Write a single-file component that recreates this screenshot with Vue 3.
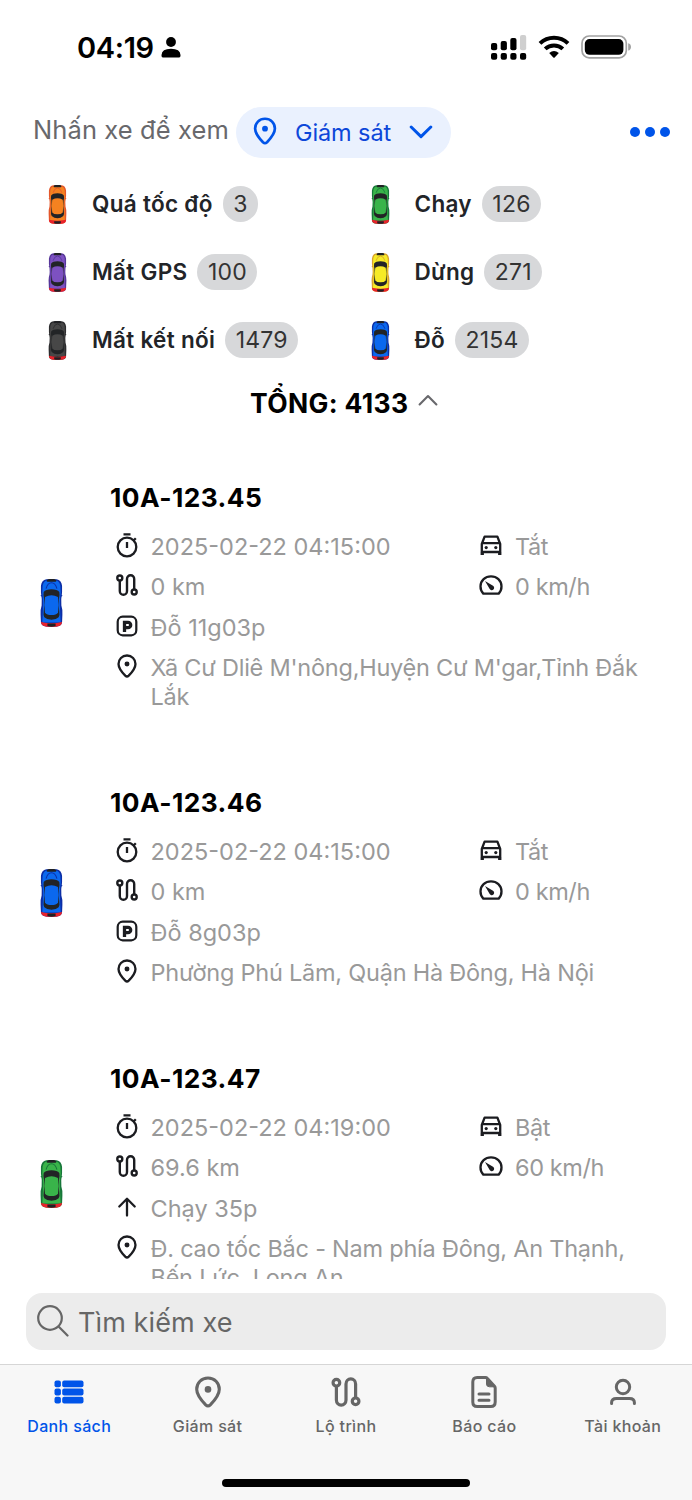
<script setup>
import { ref, computed } from 'vue'

const statuses = [
  { label: 'Quá tốc độ', count: 3, color: 'orange' },
  { label: 'Chạy', count: 126, color: 'green' },
  { label: 'Mất GPS', count: 100, color: 'purple' },
  { label: 'Dừng', count: 271, color: 'yellow' },
  { label: 'Mất kết nối', count: 1479, color: 'gray' },
  { label: 'Đỗ', count: 2154, color: 'blue' }
]

const total = computed(() => statuses.reduce((sum, s) => sum + s.count, 0))

const vehicles = [
  {
    plate: '10A-123.45',
    color: 'blue',
    time: '2025-02-22 04:15:00',
    engine: 'Tắt',
    distance: '0 km',
    speed: '0 km/h',
    stateIcon: 'parking',
    state: 'Đỗ 11g03p',
    address: "Xã Cư Dliê M'nông,Huyện Cư M'gar,Tỉnh Đắk Lắk"
  },
  {
    plate: '10A-123.46',
    color: 'blue',
    time: '2025-02-22 04:15:00',
    engine: 'Tắt',
    distance: '0 km',
    speed: '0 km/h',
    stateIcon: 'parking',
    state: 'Đỗ 8g03p',
    address: 'Phường Phú Lãm, Quận Hà Đông, Hà Nội'
  },
  {
    plate: '10A-123.47',
    color: 'green',
    time: '2025-02-22 04:19:00',
    engine: 'Bật',
    distance: '69.6 km',
    speed: '60 km/h',
    stateIcon: 'arrow-up',
    state: 'Chạy 35p',
    address: 'Đ. cao tốc Bắc - Nam phía Đông, An Thạnh, Bến Lức, Long An'
  }
]

const tabs = [
  { id: 'list', label: 'Danh sách', icon: 'list' },
  { id: 'monitor', label: 'Giám sát', icon: 'pin' },
  { id: 'route', label: 'Lộ trình', icon: 'route' },
  { id: 'report', label: 'Báo cáo', icon: 'report' },
  { id: 'account', label: 'Tài khoản', icon: 'account' }
]

const activeTab = ref('list')
const keyword = ref('')
</script>

<template>
  <div class="screen">
    <!-- Icon definitions -->
    <svg class="sprite" width="0" height="0">
      <symbol id="car" viewBox="0 0 66 141">
        <path d="M2 20 Q4 3 18 1 H48 Q62 3 64 20 L64 40 Q60 62 62 78 Q66 90 65 104 L64 128 Q62 140 46 140 H20 Q4 140 2 128 L1 104 Q0 90 4 78 Q6 62 2 40 Z" fill="var(--shade)" />
        <path d="M0 49 L6 46 V52 Z M66 49 L60 46 V52 Z" fill="var(--shade)" />
        <path d="M7 20 Q10 5 20 5 H46 Q56 5 59 20 L60 40 Q56 70 58 88 L60 128 H6 L8 88 Q10 70 6 40 Z" fill="var(--body)" />
        <path d="M17 28 Q22 11 33 11 Q44 11 49 28" fill="none" stroke="var(--shade)" stroke-width="3" />
        <path d="M19 5 Q20 0 26 0 H40 Q46 0 47 5 Q48 8 44 8 H22 Q18 8 19 5 Z" fill="#202124" />
        <path d="M10 38 Q16 30 33 30 Q50 30 56 38 Q58 48 55 58 Q53 75 56 96 Q58 106 54 112 Q45 120 33 120 Q21 120 12 112 Q8 106 10 96 Q13 75 11 58 Q8 48 10 38 Z" fill="#222426" />
        <path d="M14 53 Q33 43 52 53 Q56 76 52 99 Q47 106 33 106 Q19 106 14 99 Q10 76 14 53 Z" fill="var(--body)" />
        <path d="M2 126 Q33 134 64 126 L63 131 Q60 140 46 140 H20 Q6 140 3 131 Z" fill="#e9222b" />
        <path d="M21 131 H45 V138 Q33 142 21 138 Z" fill="#202124" />
      </symbol>
      <symbol id="pin" viewBox="0 0 32 32" fill="none">
        <path d="M16 2 C9.5 2 4.7 7 4.7 13.2 C4.7 18.6 9.8 24.8 13.7 28.8 Q16 31 18.3 28.8 C22.2 24.8 27.3 18.6 27.3 13.2 C27.3 7 22.5 2 16 2 Z" stroke="currentColor" stroke-width="3.1" />
        <circle cx="16" cy="13.4" r="3.3" fill="currentColor" />
      </symbol>
      <symbol id="stopwatch" viewBox="0 0 24 26" fill="none" stroke="currentColor" stroke-width="2.3">
        <circle cx="12" cy="15" r="9.3" />
        <path d="M8.5 2.4 H15.5 M12 10 V16 M18.8 8.2 L20.8 6.2" />
      </symbol>
      <symbol id="route" viewBox="0 0 24 24" fill="none" stroke="currentColor" stroke-width="2.4">
        <circle cx="4.8" cy="5" r="2.5" />
        <circle cx="19.2" cy="19" r="2.5" />
        <path d="M4.8 7.6 V18 A3.6 3.8 0 0 0 12 18 V6 A3.6 3.8 0 0 1 19.2 6 V16.4" />
      </symbol>
      <symbol id="parking" viewBox="0 0 24 24" fill="none" stroke="currentColor">
        <rect x="2.7" y="2.7" width="18.6" height="18.6" rx="5" stroke-width="2.2" />
        <path d="M9.5 18 V8.3 H13 A2.7 2.7 0 0 1 13 13.7 H9.5" stroke-width="3.3" />
      </symbol>
      <symbol id="arrow-up" viewBox="0 0 24 24" fill="none" stroke="currentColor" stroke-width="2.3" stroke-linecap="round" stroke-linejoin="round">
        <path d="M12 20.5 V4 M4.3 11.5 L12 3.8 L19.7 11.5" />
      </symbol>
      <symbol id="engine" viewBox="0 0 24 24" fill="none" stroke="currentColor" stroke-width="2.3" stroke-linejoin="round">
        <path d="M2.8 22 V11 L5.6 3.6 H18.4 L21.2 11 V22 M2.8 10.2 H21.2 M2.8 19 H21.2" />
        <path d="M3.4 19 V22 M20.6 19 V22" stroke-width="3" />
        <circle cx="7.2" cy="14.6" r="1.6" fill="currentColor" stroke="none" />
        <circle cx="16.8" cy="14.6" r="1.6" fill="currentColor" stroke="none" />
      </symbol>
      <symbol id="gauge" viewBox="0 0 24 24" fill="none" stroke="currentColor" stroke-width="2.3" stroke-linejoin="round">
        <path d="M4.3 20.6 Q1.4 17.5 1.5 13.3 C1.6 7.5 6.2 3.4 12 3.4 S22.4 7.5 22.5 13.3 Q22.6 17.5 19.7 20.6 Z" />
        <path d="M6 8 L14 12.7 A2.4 2.4 0 1 1 10.7 16 Z" fill="currentColor" stroke="none" />
      </symbol>
      <symbol id="list" viewBox="0 0 32 32" fill="currentColor">
        <rect x="1.5" y="4.5" width="6.4" height="6.8" rx="2" />
        <rect x="1.5" y="12.6" width="6.4" height="6.8" rx="2" />
        <rect x="1.5" y="20.7" width="6.4" height="6.8" rx="2" />
        <rect x="9.2" y="4.5" width="21.3" height="6.8" rx="2" />
        <rect x="9.2" y="12.6" width="21.3" height="6.8" rx="2" />
        <rect x="9.2" y="20.7" width="21.3" height="6.8" rx="2" />
      </symbol>
      <symbol id="report" viewBox="0 0 32 32" fill="none" stroke="currentColor" stroke-width="3" stroke-linecap="round">
        <path d="M17.5 1.5 H9.2 Q4.8 1.5 4.8 6 V26 Q4.8 30.5 9.2 30.5 H22.8 Q27.2 30.5 27.2 26 V12 Q27.2 11 26.5 10.2 L19.2 2.3 Q18.5 1.5 17.5 1.5 Z" />
        <path d="M18.5 2.5 V8 Q18.5 10.8 21.5 10.8 H26.5 Z" fill="currentColor" stroke-width="1" />
        <path d="M11 17.9 H21 M11 24.2 H21" />
      </symbol>
      <symbol id="account" viewBox="0 0 32 32" fill="none" stroke="currentColor" stroke-width="3" stroke-linecap="round">
        <circle cx="16" cy="11" r="6.7" />
        <path d="M4.6 27.5 V26.5 Q4.6 22.4 9.5 22.4 H22.5 Q27.4 22.4 27.4 26.5 V27.5" />
      </symbol>
    </svg>

    <!-- Status bar -->
    <div class="status-bar">
      <div class="clock">
        <span class="time">04:19</span>
        <svg width="20" height="21" viewBox="0 0 20 21">
          <circle cx="10" cy="5" r="4.9" />
          <path d="M.5 18 Q.8 11.7 10 11.7 T19.5 18 Q19.8 20.6 17 20.6 H3 Q.2 20.6 .5 18 Z" />
        </svg>
      </div>
      <div class="signals">
        <svg width="36" height="25" viewBox="0 0 36 25">
          <rect x="0" y="8" width="6.2" height="7.2" rx="2" />
          <rect x="9.7" y="6" width="6.2" height="9.2" rx="2" />
          <rect x="19.3" y="3" width="6.2" height="12.2" rx="2" />
          <rect x="29" y="0" width="6.2" height="15.2" rx="2" fill="#cfcfcf" />
          <rect x="0" y="18" width="6.2" height="6.8" rx="2" />
          <rect x="9.7" y="18" width="6.2" height="6.8" rx="2" />
          <rect x="19.3" y="18" width="6.2" height="6.8" rx="2" />
          <rect x="29" y="18" width="6.2" height="6.8" rx="2" />
        </svg>
        <svg class="wifi" width="32" height="24" viewBox="0 0 32 24" fill="none" stroke="#000" stroke-width="4">
          <path d="M2 8.4 C9.8 1 22.2 1 30 8.4" />
          <path d="M7.2 13.9 C12.1 9.4 19.9 9.4 24.8 13.9" />
          <path d="M11.2 18 Q16 14 20.8 18 L16.7 22.4 Q16 23 15.3 22.4 Z" fill="#000" stroke="none" />
        </svg>
        <svg class="battery" width="51" height="24" viewBox="0 0 51 24">
          <rect x="1" y="1" width="44.3" height="21.8" rx="7.2" fill="none" stroke="#a2a2a2" stroke-width="1.7" />
          <rect x="3.8" y="4" width="38.6" height="15.8" rx="4.8" />
          <path d="M47.2 8.2 Q50 9 50 11.9 T47.2 15.6 Z" fill="#a2a2a2" />
        </svg>
      </div>
    </div>

    <!-- Header -->
    <header class="header">
      <span class="hint">Nhấn xe để xem</span>
      <button class="mode">
        <svg class="mode-pin"><use href="#pin" /></svg>
        <span class="mode-text">Giám sát</span>
        <svg width="24" height="14" viewBox="0 0 24 14" fill="none" stroke="currentColor" stroke-width="3" stroke-linecap="round" stroke-linejoin="round">
          <path d="M2.2 2 L12 11.6 L21.8 2" />
        </svg>
      </button>
      <div class="more">
        <i></i><i></i><i></i>
      </div>
    </header>

    <!-- Summary -->
    <section class="summary">
      <div v-for="s in statuses" :key="s.label" class="status">
        <svg :class="['car', s.color]"><use href="#car" /></svg>
        <span class="status-label">{{ s.label }}</span>
        <span class="chip">{{ s.count }}</span>
      </div>
    </section>
    <div class="total">
      <span>TỔNG: {{ total }}</span>
      <svg class="chevron" width="20" height="12" viewBox="0 0 20 12" fill="none" stroke="#68686c" stroke-width="2.1" stroke-linecap="round" stroke-linejoin="round">
        <path d="M1.6 10.4 L10 2 L18.4 10.4" />
      </svg>
    </div>

    <!-- Vehicle list -->
    <main class="list">
      <article v-for="v in vehicles" :key="v.plate" class="vehicle">
        <svg :class="['car', 'car-lg', v.color]"><use href="#car" /></svg>
        <div class="info">
          <h2>{{ v.plate }}</h2>
          <div class="row">
            <div class="cell">
              <svg class="icon stopwatch"><use href="#stopwatch" /></svg>
              <span>{{ v.time }}</span>
            </div>
            <div class="cell side">
              <svg class="icon"><use href="#engine" /></svg>
              <span>{{ v.engine }}</span>
            </div>
          </div>
          <div class="row">
            <div class="cell">
              <svg class="icon"><use href="#route" /></svg>
              <span>{{ v.distance }}</span>
            </div>
            <div class="cell side">
              <svg class="icon"><use href="#gauge" /></svg>
              <span>{{ v.speed }}</span>
            </div>
          </div>
          <div class="row">
            <div class="cell">
              <svg class="icon"><use :href="'#' + v.stateIcon" /></svg>
              <span>{{ v.state }}</span>
            </div>
          </div>
          <div class="row">
            <div class="cell">
              <svg class="icon"><use href="#pin" /></svg>
              <span class="address">{{ v.address }}</span>
            </div>
          </div>
        </div>
      </article>
    </main>

    <!-- Search -->
    <label class="search">
      <svg width="32" height="32" viewBox="0 0 32 32" fill="none" stroke="#666" stroke-width="2.2" stroke-linecap="round">
        <circle cx="13" cy="13" r="11.8" />
        <path d="M21.8 21.8 L30.5 30.5" />
      </svg>
      <input v-model="keyword" placeholder="Tìm kiếm xe">
    </label>

    <!-- Tab bar -->
    <nav class="tabs">
      <div
        v-for="tab in tabs"
        :key="tab.id"
        :class="['tab', { active: tab.id === activeTab }]"
        @click="activeTab = tab.id"
      >
        <svg class="tab-icon"><use :href="'#' + tab.icon" /></svg>
        <span>{{ tab.label }}</span>
      </div>
      <div class="home-indicator"></div>
    </nav>
  </div>
</template>

<style>
body {
  background: #fff;
}
</style>

<style scoped>
.screen {
  width: 692px;
  height: 1500px;
  display: flex;
  flex-direction: column;
  overflow: hidden;
  background: #fff;
  font-family: Inter, "Noto Sans", sans-serif;
  color: #000;
}

svg {
  flex: none;
  display: block;
}

.sprite {
  position: absolute;
}

/* Status bar */
.status-bar {
  flex: none;
  height: 94px;
  padding: 0 60px 0 77px;
  display: flex;
  justify-content: space-between;
  align-items: center;
}

.clock,
.signals {
  display: flex;
  align-items: center;
}

.clock {
  gap: 7px;
}

.time {
  font-size: 29px;
  font-weight: 600;
  letter-spacing: -0.35px;
}

.wifi {
  margin-left: 11px;
}

.battery {
  margin-left: 11px;
}

/* Header */
.header {
  flex: none;
  height: 76px;
  padding: 0 22px 0 33px;
  display: flex;
  align-items: center;
}

.hint {
  width: 203px;
  margin-top: -5px;
  font-size: 25.5px;
  letter-spacing: 0.1px;
  white-space: nowrap;
  color: #68686c;
}

.mode {
  width: 215px;
  height: 51px;
  padding: 0 18px 0 15px;
  display: flex;
  align-items: center;
  border: 0;
  border-radius: 26px;
  background: #eaf1fe;
  font-family: inherit;
  color: #0054e9;
}

.mode-pin {
  width: 28px;
  height: 28px;
  margin-top: -2px;
}

.mode-text {
  flex: 1;
  margin-left: 16px;
  text-align: left;
  font-size: 23.5px;
  letter-spacing: -0.1px;
  color: #0d47d9;
}

.more {
  margin-left: auto;
  display: flex;
  gap: 5px;
}

.more i {
  width: 10px;
  height: 10px;
  border-radius: 50%;
  background: #0054e9;
}

/* Summary */
.summary {
  flex: none;
  padding-left: 48px;
  display: grid;
  grid-template-columns: 322.5px 1fr;
  grid-auto-rows: 68.3px;
}

.status {
  display: flex;
  align-items: center;
}

.status-label {
  margin: -2px 10px 0 25px;
  font-size: 22.5px;
  font-weight: 600;
  letter-spacing: 0.3px;
  color: #222428;
}

.chip {
  height: 36px;
  margin-top: -1px;
  padding: 0 10.5px;
  border-radius: 18px;
  background: #d7d8da;
  font-size: 23px;
  letter-spacing: 0.2px;
  line-height: 36px;
  color: #333;
}

.total {
  flex: none;
  height: 76px;
  padding-bottom: 19px;
  padding-left: 250px;
  box-sizing: border-box;
  display: flex;
  align-items: center;
  gap: 9px;
  font-size: 26.5px;
  font-weight: 700;
  letter-spacing: 0.35px;
}

.chevron {
  margin-top: -7px;
}

/* Vehicle colours */
.car {
  width: 19px;
  height: 39px;
}

.car-lg {
  width: 23px;
  height: 48px;
}

.orange {
  --body: #f58220;
  --shade: #e4572b;
}

.green {
  --body: #39b44a;
  --shade: #17773a;
}

.purple {
  --body: #7d51c1;
  --shade: #56369a;
}

.yellow {
  --body: #f6eb26;
  --shade: #d9a32c;
}

.gray {
  --body: #474747;
  --shade: #2c2c2e;
}

.blue {
  --body: #0b68ee;
  --shade: #0c2ea6;
}

/* Vehicle list */
.list {
  flex: none;
  height: 828px;
  overflow: hidden;
}

.vehicle {
  display: flex;
  align-items: center;
  padding: 0 36px 38.7px 40px;
}

.car-lg {
  position: relative;
  top: 19px;
}

.info {
  flex: 1;
  margin-left: 47px;
  padding-top: 29px;
}

.info h2 {
  margin: 0 0 10.2px;
  font-size: 26.3px;
  font-weight: 700;
  letter-spacing: 0.45px;
  line-height: 36px;
}

.row {
  display: flex;
  justify-content: space-between;
  padding: 5.75px 0;
  font-size: 23.5px;
  line-height: 29px;
  color: #999;
}

.cell {
  display: flex;
  gap: 12px;
}

.side {
  width: 181.5px;
  letter-spacing: -0.4px;
}

.icon {
  width: 24px;
  height: 24px;
  margin: 1px 0 0 4.5px;
  color: #1b1c20;
}

.stopwatch {
  height: 26px;
  margin-top: 0;
}

.address {
  width: 500px;
  letter-spacing: -0.23px;
}

/* Search */
.search {
  flex: none;
  margin: 14px 26px;
  height: 57px;
  padding-left: 11px;
  display: flex;
  align-items: center;
  gap: 9px;
  border-radius: 16px;
  background: #ececec;
}

.search input {
  flex: 1;
  padding: 2px 0 0;
  border: 0;
  outline: 0;
  background: none;
  font-family: inherit;
  font-size: 27px;
  letter-spacing: 0.1px;
}

.search input::placeholder {
  color: #666;
  opacity: 1;
}

/* Tab bar */
.tabs {
  position: relative;
  flex: 1;
  display: flex;
  border-top: 1px solid #d6d6d6;
  background: #f7f7f7;
}

.tab {
  flex: 1;
  display: flex;
  flex-direction: column;
  align-items: center;
  padding-top: 11px;
  font-size: 16px;
  font-weight: 450;
  line-height: 20px;
  letter-spacing: 0.35px;
  color: #666;
}

.tab.active {
  color: #0054e9;
}

.tab-icon {
  width: 32px;
  height: 32px;
  margin-bottom: 8px;
}

.home-indicator {
  position: absolute;
  bottom: 13px;
  left: 222px;
  width: 248px;
  height: 8px;
  border-radius: 4px;
  background: #000;
}
</style>
